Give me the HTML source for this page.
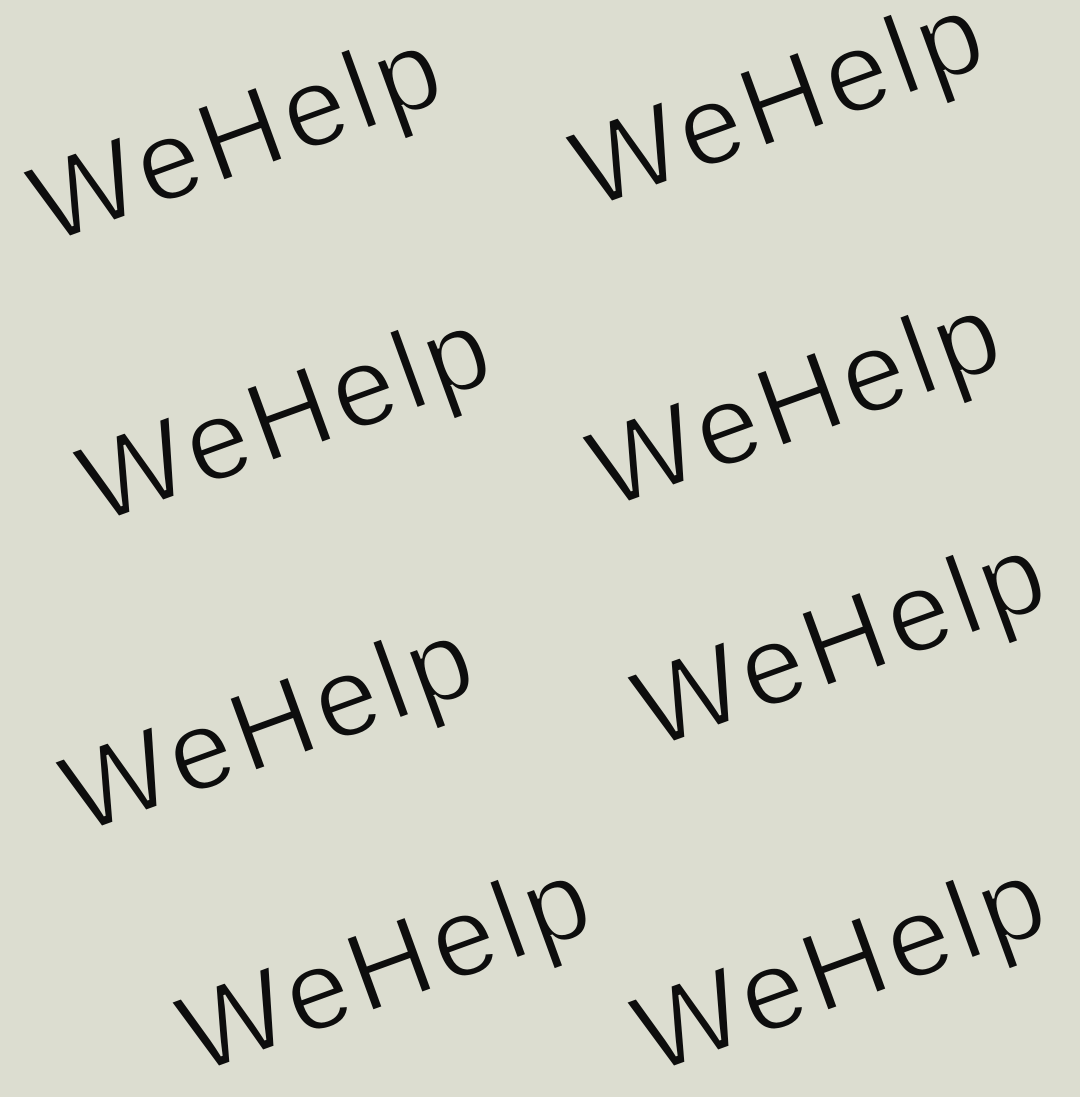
<!DOCTYPE html>
<html><head><meta charset="utf-8"><style>
html,body{margin:0;padding:0}
body{width:1080px;height:1080px;background:#dcddd0;position:relative;overflow:hidden}
.t{position:absolute;font-family:"Liberation Sans",sans-serif;font-size:112px;color:#0d0d0d;letter-spacing:6px;white-space:nowrap;line-height:1;transform:translate(-50%,-50%) rotate(-20deg);-webkit-text-stroke:2px #dcddd0;paint-order:fill stroke}
</style></head><body>
<div class="t" style="left:238px;top:135px">WeHelp</div>
<div class="t" style="left:780px;top:100px">WeHelp</div>
<div class="t" style="left:287px;top:415px">WeHelp</div>
<div class="t" style="left:797px;top:400px">WeHelp</div>
<div class="t" style="left:270px;top:725px">WeHelp</div>
<div class="t" style="left:842px;top:640px">WeHelp</div>
<div class="t" style="left:387px;top:965px">WeHelp</div>
<div class="t" style="left:842px;top:965px">WeHelp</div>
</body></html>
